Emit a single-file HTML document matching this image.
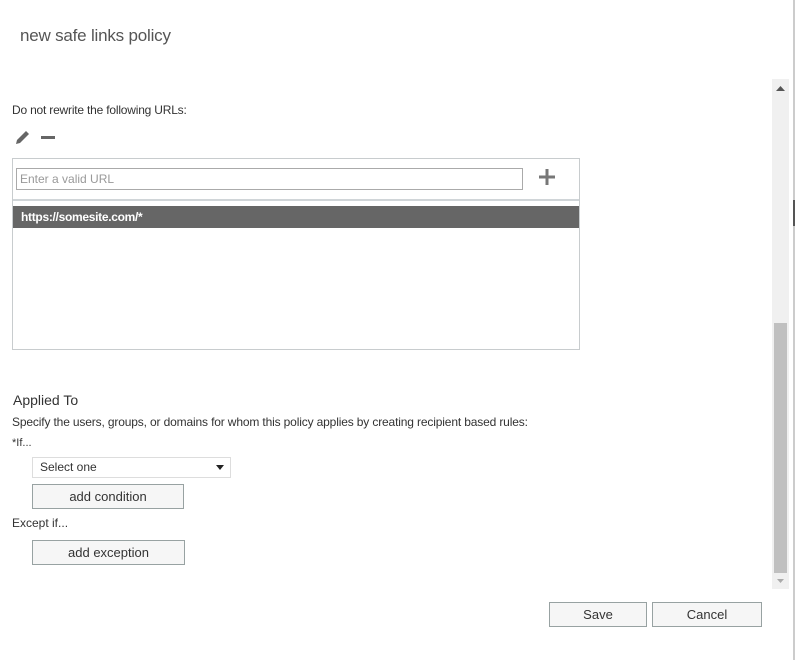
<!DOCTYPE html>
<html><head><style>
body{margin:0;width:796px;height:660px;background:#fff;position:relative;overflow:hidden;font-family:"Segoe UI","Liberation Sans",sans-serif;color:#333}
.a{position:absolute}
.t{font-size:12px;color:#333;white-space:nowrap}
.btn{position:absolute;background:#f6f6f6;border:1px solid #98a2a2;box-sizing:border-box;font-size:13px;text-align:center;color:#333}
</style></head><body>
<div class="a" style="left:20px;top:26px;font-size:17px;color:#555;letter-spacing:-0.2px">new safe links policy</div>
<div class="a t" style="left:12px;top:103px;letter-spacing:-0.2px">Do not rewrite the following URLs:</div>
<svg class="a" style="left:14px;top:129px" width="44" height="18"><path d="M2 15 L3 11 L12 2 L15 5 L6 14 Z" fill="#666"/><rect x="27" y="7" width="14" height="3" fill="#666"/></svg>
<div class="a" style="left:12px;top:158px;width:566px;height:190px;border:1px solid #c8ccce"></div>
<div class="a" style="left:16px;top:168px;height:20px;border:1px solid #aaa;font-size:12px;color:#999;line-height:20px;padding-left:3px;width:502px">Enter a valid URL</div>
<svg class="a" style="left:539px;top:169px" width="16" height="16"><rect x="6.5" y="0" width="3" height="16" fill="#777"/><rect x="0" y="6.5" width="16" height="3" fill="#777"/></svg>
<div class="a" style="left:13px;top:199px;width:566px;height:2px;background:#d0d5d8"></div>
<div class="a" style="left:13px;top:206px;width:566px;height:22px;background:#666;color:#fff;font-weight:bold;font-size:12px;line-height:22px;padding-left:8px;box-sizing:border-box;letter-spacing:-0.3px">https://somesite.com/*</div>
<div class="a" style="left:13px;top:392px;font-size:14px;color:#333">Applied To</div>
<div class="a t" style="left:12px;top:415px;letter-spacing:-0.15px">Specify the users, groups, or domains for whom this policy applies by creating recipient based rules:</div>
<div class="a t" style="left:12px;top:437px;font-size:11px">*If...</div>
<div class="a" style="left:32px;top:457px;width:199px;height:21px;border:1px solid #ddd;box-sizing:border-box;font-size:12px;line-height:19px;padding-left:7px">Select one</div>
<svg class="a" style="left:216px;top:465px" width="8" height="5"><path d="M0 0 L8 0 L4 5Z" fill="#222"/></svg>
<div class="btn" style="left:32px;top:484px;width:152px;height:25px;line-height:23px">add condition</div>
<div class="a t" style="left:12px;top:516px">Except if...</div>
<div class="btn" style="left:32px;top:540px;width:153px;height:25px;line-height:23px">add exception</div>
<div class="a" style="left:772px;top:79px;width:17px;height:510px;background:#f0f0f0"></div>
<svg class="a" style="left:776px;top:86px" width="9" height="5"><path d="M0 5 L9 5 L4.5 0Z" fill="#555"/></svg>
<div class="a" style="left:774px;top:323px;width:13px;height:250px;background:#c0c0c0"></div>
<svg class="a" style="left:777px;top:579px" width="7" height="4"><path d="M0 0 L7 0 L3.5 4Z" fill="#aaa"/></svg>
<div class="a" style="left:793px;top:0;width:2px;height:660px;background:#ccc"></div>
<div class="a" style="left:793px;top:200px;width:2px;height:26px;background:#555"></div>
<div class="btn" style="left:549px;top:602px;width:98px;height:25px;line-height:23px">Save</div>
<div class="btn" style="left:652px;top:602px;width:110px;height:25px;line-height:23px">Cancel</div>
</body></html>
